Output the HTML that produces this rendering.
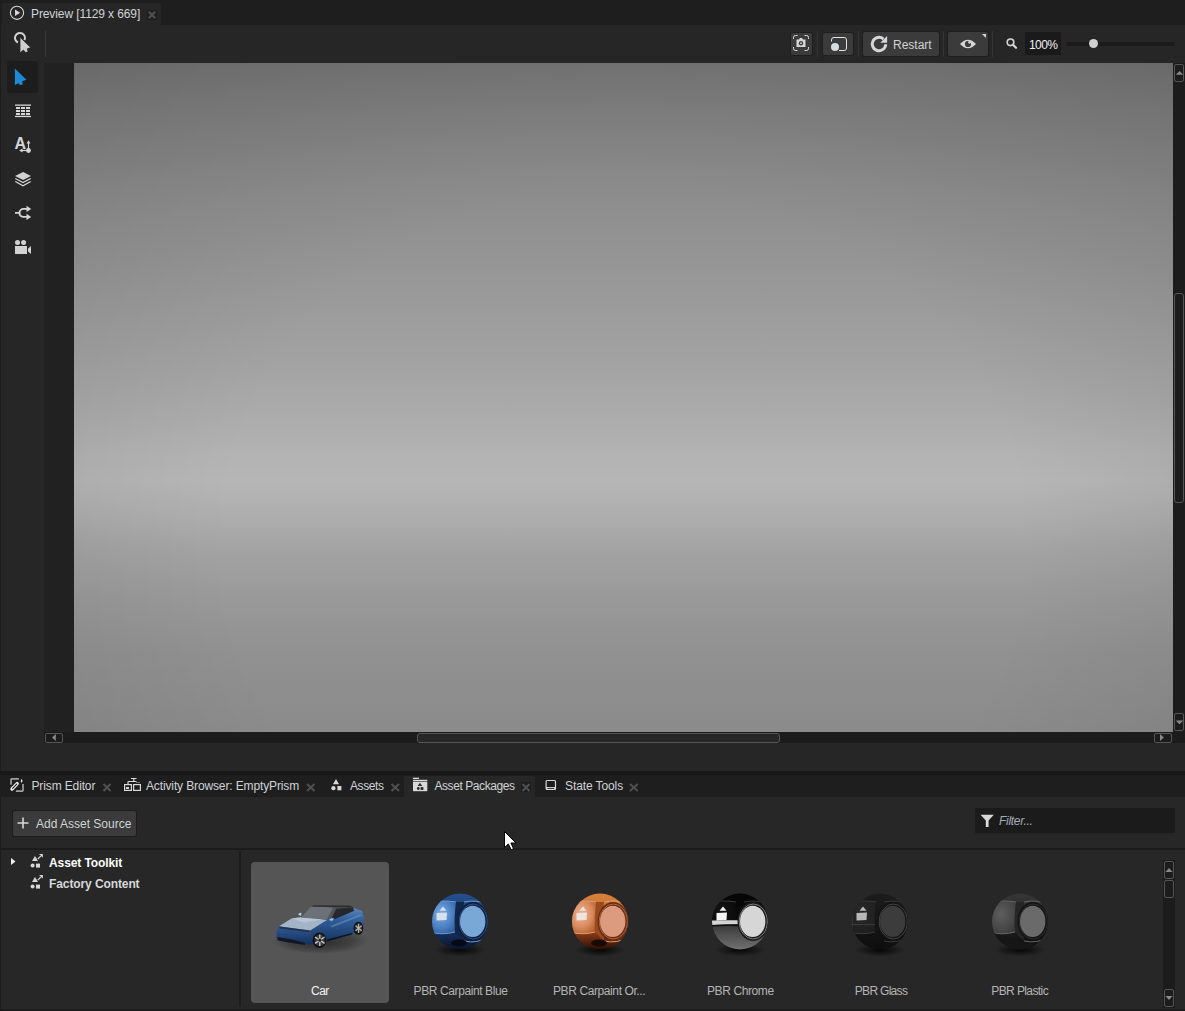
<!DOCTYPE html>
<html><head><meta charset="utf-8">
<style>
*{margin:0;padding:0;box-sizing:border-box}
html,body{width:1185px;height:1011px;overflow:hidden;background:#1c1c1c;font-family:"Liberation Sans",sans-serif;font-size:12px;color:#d4d4d4}
.a{position:absolute}
.t{position:absolute;white-space:nowrap;line-height:1}
svg{position:absolute;overflow:visible}
.btn{position:absolute;background:#3a3b3a;border-radius:2px;box-shadow:0 0 0 1px #1e1e1e}
.sep{position:absolute;width:1px;height:26px;top:31px;background:#353535}
.sb{position:absolute;border:1px solid #555;border-radius:3px}
.tab{color:#cfd3d6}
.lbl{color:#b4b4b4;letter-spacing:-0.4px}
</style></head><body>
<!-- ===== top tab strip ===== -->
<div class="a" style="left:0;top:0;width:1185px;height:25px;background:#1e1e1e"></div>
<div class="a" style="left:2px;top:3px;width:159px;height:22px;background:#262626;border-radius:2px 2px 0 0"></div>
<div class="t tab" style="left:31px;top:8px;letter-spacing:-0.1px">Preview [1129 x 669]</div>
<svg style="left:0;top:0" width="40" height="25"><circle cx="17" cy="12.8" r="6.6" fill="none" stroke="#d6d6d6" stroke-width="1.1"/><path d="M15 9.6 L20.2 12.8 L15 16 Z" fill="#d6d6d6"/></svg>
<div class="a" style="left:147px;top:10px;width:10px;height:10px;background:#1e1e1e"></div>
<svg style="left:147px;top:10px" width="10" height="10"><path d="M1.8 1.8 L8.2 8.2 M8.2 1.8 L1.8 8.2" stroke="#4e4e4e" stroke-width="2.3"/></svg>

<!-- ===== main preview panel ===== -->
<div class="a" style="left:1px;top:25px;width:1184px;height:746px;background:#262626"></div>
<div class="a" style="left:45px;top:31px;width:1px;height:26px;background:#3a3a3a"></div>
<!-- pointer icon -->
<svg style="left:0;top:25px" width="44" height="38"><path d="M17.9 17.5 A5 5 0 1 1 24.5 15.1" fill="none" stroke="#d2d2d2" stroke-width="2"/><path d="M20 12.2 L30.8 22.6 L27.3 23.8 L28.2 26.7 L25.5 27.6 L23.4 25 L20 28 Z" fill="#cfcfcf" stroke="#262626" stroke-width="0.8"/></svg>
<!-- left tools -->
<div class="a" style="left:7px;top:61px;width:31px;height:32px;background:#1d1d1d;border-radius:3px"></div>
<svg style="left:0;top:60px" width="44" height="200">
<path d="M14.9 8.6 L26.5 19.7 L22.1 21.2 L22.9 24.5 L20 25 L18.5 23.3 L14.9 25 Z" fill="#1f8ad4"/>
<rect x="15" y="44.5" width="16" height="1.3" fill="#d6d6d6"/><rect x="15" y="55.8" width="16" height="1.3" fill="#d6d6d6"/>
<g fill="#d6d6d6"><rect x="16" y="47" width="4" height="2"/><rect x="21" y="47" width="4" height="2"/><rect x="26" y="47" width="4" height="2"/>
<rect x="16" y="50" width="4" height="2"/><rect x="21" y="50" width="4" height="2"/><rect x="26" y="50" width="4" height="2"/>
<rect x="16" y="53" width="4" height="2"/><rect x="21" y="53" width="4" height="2"/><rect x="26" y="53" width="4" height="2"/></g>
</svg>
<svg style="left:0;top:130px" width="44" height="140">
<text x="14.6" y="19" font-family="Liberation Sans" font-weight="bold" font-size="16" fill="#d6d6d6">A</text>
<path d="M28.5 20.5 V12" stroke="#d6d6d6" stroke-width="1.2"/><path d="M26.5 13.5 L28.5 10.3 L30.5 13.5 Z" fill="#d6d6d6"/>
<path d="M28.5 20.5 H21" stroke="#d6d6d6" stroke-width="1.2"/><path d="M22.5 18.5 L19.2 20.5 L22.5 22.5 Z" fill="#d6d6d6"/>
<circle cx="28.5" cy="20.5" r="2.4" fill="#d6d6d6"/>
<path d="M15 45.9 L23.1 41.9 L31 45.9 L23.1 50 Z" fill="#d2d2d2"/>
<path d="M15.3 48.5 L23 52.5 L30.7 48.5 M15.3 51.5 L23 55.7 L30.7 51.5" fill="none" stroke="#d6d6d6" stroke-width="1.3"/>
<path d="M15 82.9 H20 M29 78.9 H23.5 A4 4 0 0 0 23.5 86.9 H29" fill="none" stroke="#d6d6d6" stroke-width="1.9"/>
<path d="M26.5 75.8 L31.2 78.9 L26.5 82 Z M26.5 83.8 L31.2 86.9 L26.5 90 Z" fill="#d6d6d6"/>
<circle cx="17.5" cy="112.4" r="2.5" fill="#d2d2d2"/><circle cx="23.6" cy="112.4" r="2.5" fill="#d2d2d2"/>
<rect x="15" y="116" width="12" height="8" fill="#d2d2d2"/><path d="M28 118.8 L31 116 V124 L28 121.4 Z" fill="#d2d2d2"/>
</svg>
<!-- right toolbar -->
<div class="btn" style="left:791px;top:33px;width:21px;height:22px"></div>
<div class="sep" style="left:817px"></div>
<div class="btn" style="left:823px;top:33px;width:30px;height:22px"></div>
<div class="sep" style="left:858px"></div>
<div class="btn" style="left:863px;top:32px;width:76px;height:24px"></div>
<div class="sep" style="left:943px"></div>
<div class="btn" style="left:948px;top:32px;width:40px;height:24px"></div>
<div class="sep" style="left:992px"></div>
<svg style="left:780px;top:25px" width="405" height="38">
<path d="M13.5 14 V12.5 A2 2 0 0 1 15.5 10.5 H17.5 M24.5 10.5 H26.5 A2 2 0 0 1 28.5 12.5 V14 M28.5 22 V23.5 A2 2 0 0 1 26.5 25.5 H24.5 M17.5 25.5 H15.5 A2 2 0 0 1 13.5 23.5 V22" fill="none" stroke="#dadada" stroke-width="1"/>
<path d="M16.5 14.5 H19 L20 13 H22 L23 14.5 H25.5 V22 H16.5 Z" fill="#d6d6d6"/><circle cx="21" cy="18.2" r="2.2" fill="#3a3b3a"/><circle cx="21" cy="18.2" r="0.9" fill="#d6d6d6"/>
<path d="M51.5 16.5 V15 A2.5 2.5 0 0 1 54 12.5 H64 A2.5 2.5 0 0 1 66.5 15 V23 A2.5 2.5 0 0 1 64 25.5 H59" fill="none" stroke="#e0e3e8" stroke-width="1"/>
<circle cx="55" cy="22.1" r="4" fill="#d8dce3"/>
<path d="M103.48 14.02 A6.7 6.7 0 1 0 105.7 19.23" fill="none" stroke="#d6d6d6" stroke-width="3"/>
<path d="M100.3 17.8 L107.1 11 L107.1 17.8 Z" fill="#d6d6d6"/>
<path d="M180 19 Q188 10.5 196 19 Q188 27.5 180 19 Z" fill="#d6d6d6"/><circle cx="188" cy="19" r="3.1" fill="#3a3b3a"/><circle cx="189.6" cy="17.3" r="1.4" fill="#d6d6d6"/>
<path d="M202 9 H206 V13 Z" fill="#d6d6d6"/>
<circle cx="230.5" cy="17.3" r="3.3" fill="none" stroke="#d6d6d6" stroke-width="1.6"/><path d="M233 19.8 L236 22.8" stroke="#d6d6d6" stroke-width="2.3" stroke-linecap="round"/>
</svg>
<div class="t tab" style="left:893px;top:38.7px">Restart</div>
<div class="a" style="left:1025px;top:32px;width:36px;height:23px;background:#1a1a1a"></div>
<div class="t" style="left:1029px;top:38.8px;color:#f0f0f0;letter-spacing:-0.6px">100%</div>
<div class="a" style="left:1066px;top:42px;width:109px;height:4px;background:#1a1b1a;border-radius:2px"></div>
<div class="a" style="left:1088.8px;top:39.4px;width:9px;height:9px;background:#d0d0d0;border-radius:50%"></div>

<!-- gutter -->
<div class="a" style="left:44px;top:63px;width:30px;height:669px;background:#212121"></div>
<!-- preview -->
<div class="a" id="pv" style="left:74px;top:63px;width:1099px;height:669px;background:radial-gradient(ellipse 72% 105% at 50% 72%,rgba(0,0,0,0) 50%,rgba(0,0,0,0.11) 100%),linear-gradient(#757575 0%,#808080 8%,#8d8d8d 20%,#989898 33%,#a3a3a3 45%,#adadad 54%,#b3b3b3 58.5%,#b6b6b6 62.5%,#aeaeae 67.5%,#a3a3a3 73%,#999999 80%,#919191 88%,#8b8b8b 100%)"></div>
<!-- v scrollbar -->
<div class="a" style="left:1173px;top:63px;width:12px;height:669px;background:#1b1c1b"></div>
<div class="sb" style="left:1174px;top:64px;width:10px;height:18px;border-radius:2px"></div>
<svg style="left:1173px;top:63px" width="12" height="669"><path d="M2.8 11.8 L6.5 8 L10.2 11.8 Z" fill="#8a8a8a"/><path d="M2.8 657.5 L6.5 661.2 L10.2 657.5 Z" fill="#8a8a8a"/></svg>
<div class="sb" style="left:1174px;top:293px;width:10px;height:210px"></div>
<div class="sb" style="left:1174px;top:713px;width:10px;height:18px;border-radius:2px"></div>
<!-- h scrollbar -->
<div class="a" style="left:44px;top:732px;width:1129px;height:11px;background:#1b1c1b"></div>
<div class="a" style="left:1173px;top:732px;width:12px;height:11px;background:#1b1c1b"></div>
<div class="sb" style="left:45px;top:733px;width:18px;height:10px;border-radius:2px"></div>
<div class="sb" style="left:417px;top:733px;width:363px;height:10px;background:#272727"></div>
<div class="sb" style="left:1154px;top:733px;width:18px;height:10px;border-radius:2px"></div>
<svg style="left:44px;top:732px" width="1141" height="11"><path d="M11.8 2 L8 5.5 L11.8 9 Z" fill="#8a8a8a"/><path d="M1116 2 L1119.8 5.5 L1116 9 Z" fill="#8a8a8a"/></svg>

<!-- ===== bottom tabs ===== -->
<div class="a" style="left:0;top:771px;width:1185px;height:4px;background:#181818"></div>
<div class="a" style="left:0;top:775px;width:1185px;height:22px;background:#1e1e1e"></div>
<div class="a" style="left:404px;top:775.5px;width:131px;height:22px;background:#272727;border-radius:2px 2px 0 0"></div>

<!-- ===== bottom panel ===== -->
<div class="a" style="left:1px;top:797px;width:1184px;height:212px;background:#272727"></div>
<div class="a" style="left:1px;top:848px;width:1184px;height:2px;background:#1c1c1c"></div>
<div class="a" style="left:239px;top:851px;width:2px;height:156px;background:#1c1c1c"></div>

<!-- tab icons & labels -->
<svg style="left:0;top:775px" width="700" height="22">
<g fill="none" stroke="#a0a0a0" stroke-width="1.7">
<path d="M11 9.7 V4.6 Q11 3.9 11.7 3.9 H18.9"/><path d="M23 8.9 V15.3 Q23 16.1 22.2 16.1 H15.9"/>
</g>
<ellipse cx="21.6" cy="5.9" rx="0.8" ry="1.6" fill="#eee"/>
<path d="M12 14 L17.2 8.6" stroke="#f0f0f0" stroke-width="3.4" stroke-linecap="round"/>
<path d="M12.6 13.4 L16.7 9.1" stroke="#1e1e1e" stroke-width="1.1" stroke-linecap="round"/>
<path d="M103.5 9 L110.5 16 M110.5 9 L103.5 16" stroke="#505050" stroke-width="2"/>
<g fill="none" stroke="#d8d8d8" stroke-width="1.2">
<path d="M131 3.5 H136.5 M133.8 3.5 V6.5 M128 6.5 H136.5 M128 6.5 V9.5"/>
<rect x="124.6" y="9.6" width="6.8" height="5.8"/><rect x="133.6" y="9.6" width="6.8" height="5.8"/>
</g>
<rect x="126" y="12" width="3" height="2" fill="#d8d8d8"/>
<circle cx="137" cy="7.5" r="0.6" fill="#d8d8d8"/><circle cx="139" cy="7.5" r="0.6" fill="#d8d8d8"/>
<path d="M307 9 L314.5 16 M314.5 9 L307 16" stroke="#505050" stroke-width="2"/>
<g fill="#d8d8d8"><path d="M336 4 L339 9.3 L333 9.3 Z"/><circle cx="333.4" cy="13.2" r="2.1"/><rect x="337.4" y="11" width="4" height="4.3"/></g>
<path d="M391.5 9 L399 16 M399 9 L391.5 16" stroke="#505050" stroke-width="2"/>
<g fill="#d8d8d8"><rect x="413" y="2.7" width="6" height="1.3"/><rect x="413" y="4.8" width="14.3" height="1.2"/><rect x="413" y="6.6" width="14.3" height="9.6"/></g>
<g fill="#272727"><path d="M420 7.8 L422.3 11 L417.7 11 Z"/><circle cx="418.3" cy="13.5" r="1.4"/><rect x="420.6" y="12.1" width="2.8" height="2.8"/></g>
<rect x="521" y="7" width="10" height="9.6" fill="#1d1d1d"/>
<path d="M522.5 9 L529.5 16 M529.5 9 L522.5 16" stroke="#505050" stroke-width="2"/>
<g fill="none" stroke="#d8d8d8" stroke-width="1.2"><rect x="546.1" y="5.5" width="9.4" height="8.8" rx="1"/></g>
<rect x="546" y="12" width="9.6" height="2.8" fill="#d8d8d8"/><rect x="547.5" y="12.9" width="6.6" height="0.9" fill="#1e1e1e"/>
<path d="M630 9 L637.8 16 M637.8 9 L630 16" stroke="#505050" stroke-width="2"/>
</svg>
<div class="t tab" style="left:31.5px;top:779.6px;letter-spacing:-0.13px">Prism Editor</div>
<div class="t tab" style="left:146px;top:779.6px;letter-spacing:-0.13px">Activity Browser: EmptyPrism</div>
<div class="t tab" style="left:350px;top:780.1px;letter-spacing:-0.4px">Assets</div>
<div class="t tab" style="left:434.4px;top:780.1px;letter-spacing:-0.42px">Asset Packages</div>
<div class="t tab" style="left:565px;top:779.6px;letter-spacing:-0.1px">State Tools</div>

<!-- add asset source -->
<div class="btn" style="left:13px;top:811px;width:123px;height:25px;background:#3a3b3a"></div>
<svg style="left:0;top:800px" width="200" height="48"><path d="M23 17.5 V28.5 M17.5 23 H28.5" stroke="#d8d8d8" stroke-width="1.6"/></svg>
<div class="t tab" style="left:36px;top:817.6px">Add Asset Source</div>
<!-- filter -->
<div class="a" style="left:975px;top:808px;width:200px;height:25px;background:#1a1b1a"></div>
<svg style="left:975px;top:808px" width="200" height="25"><path d="M5.6 6.8 H18.8 L13.6 12.6 V19 H10.8 V12.6 Z" fill="#d8d8d8"/></svg>
<div class="t" style="left:999px;top:815px;font-style:italic;color:#a6adb5;letter-spacing:-0.3px">Filter...</div>

<!-- tree -->
<svg style="left:0;top:850px" width="240" height="60">
<path d="M11 8 L15.5 11.5 L11 15 Z" fill="#eeeeee"/>
<g fill="#d8d8d8">
<path d="M35 6 L38 11 L32 11 Z"/><circle cx="32.6" cy="15.6" r="2"/><rect x="36" y="13.6" width="4" height="4"/>
<path d="M37.8 9 L42 4.8 M39.5 4.5 H42.3 V7.3" stroke="#d8d8d8" stroke-width="1.1" fill="none"/>
<path d="M35 27 L38 32 L32 32 Z"/><circle cx="32.6" cy="36.6" r="2"/><rect x="36" y="34.6" width="4" height="4"/>
<path d="M37.8 30 L42 25.8 M39.5 25.5 H42.3 V28.3" stroke="#d8d8d8" stroke-width="1.1" fill="none"/>
</g>
</svg>
<div class="t" style="left:49px;top:856.8px;font-weight:bold;color:#ffffff;letter-spacing:-0.1px">Asset Toolkit</div>
<div class="t" style="left:49px;top:878px;font-weight:bold;color:#d6d8da;letter-spacing:-0.1px">Factory Content</div>

<!-- grid scrollbar -->
<div class="a" style="left:1163px;top:860px;width:12px;height:148px;background:#1b1c1b"></div>
<div class="sb" style="left:1164px;top:861px;width:10px;height:18px;border-radius:2px"></div>
<div class="sb" style="left:1164px;top:880px;width:10px;height:18px;border-radius:2px"></div>
<div class="sb" style="left:1164px;top:988.5px;width:10px;height:18px;border-radius:2px"></div>
<svg style="left:1163px;top:860px" width="12" height="150"><path d="M2.5 12 L6 8.1 L9.5 12 Z" fill="#8a8a8a"/><path d="M2.5 136 L6 140 L9.5 136 Z" fill="#8a8a8a"/></svg>

<!-- car card -->
<div class="a" style="left:251px;top:862px;width:138px;height:141px;background:#555555;border-radius:4px"></div>
<div class="t" style="left:311px;top:985.2px;color:#f2f2f2;letter-spacing:-0.5px">Car</div>
<div class="t lbl" style="left:413.6px;top:984.6px">PBR Carpaint Blue</div>
<div class="t lbl" style="left:553px;top:984.6px">PBR Carpaint Or...</div>
<div class="t lbl" style="left:707px;top:984.6px">PBR Chrome</div>
<div class="t lbl" style="left:854.8px;top:984.6px;letter-spacing:-0.7px">PBR Glass</div>
<div class="t lbl" style="left:991.3px;top:984.6px;letter-spacing:-0.6px">PBR Plastic</div>

<!-- cursor -->
<svg style="left:504px;top:831px" width="14" height="20"><path d="M0.5 0.5 V16.6 L4.3 13 L7.2 18.7 L9.6 17.7 L6.9 12 H12 Z" fill="#ffffff" stroke="#000" stroke-width="1"/></svg>
<!--GRID-->
<!-- car -->
<svg style="left:270px;top:895px" width="100" height="62">
<defs>
<radialGradient id="carsh" cx="50%" cy="50%" r="50%"><stop offset="0" stop-color="#000" stop-opacity="0.5"/><stop offset="0.7" stop-color="#000" stop-opacity="0.22"/><stop offset="1" stop-color="#000" stop-opacity="0"/></radialGradient>
<linearGradient id="carside" x1="0" y1="0" x2="0" y2="1"><stop offset="0" stop-color="#5c86bc"/><stop offset="0.35" stop-color="#2e5c98"/><stop offset="1" stop-color="#163058"/></linearGradient>
<linearGradient id="carfront" x1="0" y1="0" x2="0" y2="1"><stop offset="0" stop-color="#2e5a96"/><stop offset="1" stop-color="#16305a"/></linearGradient>
</defs>
<ellipse cx="50" cy="46" rx="48" ry="13" fill="url(#carsh)"/>
<path d="M56 25 L84 13 L92 16 L94 22 L93 31 L86 38 L60 45.5 L46 49 L40 36 Z" fill="url(#carside)"/>
<path d="M6.5 36 L9 31.2 L40 35.4 L46 49 L34 49.5 L10 46 L6.5 43 Z" fill="url(#carfront)"/>
<path d="M9 31.2 L21.5 23.5 L33 22 L57 24.9 L40 35.4 Z" fill="#a4b4c8"/>
<path d="M21.5 23.5 L33 22 L52 24.5 L34 27.5 Z" fill="#c4d0de" opacity="0.6"/>
<path d="M31.2 22.8 L41 11.6 L63.3 12.3 L57 24.2 Z" fill="#6c7078"/>
<path d="M61.9 22.8 L66.1 13.7 L82.9 12.3 L84.2 15.8 L64.7 24.2 Z" fill="#25282e"/>
<path d="M41 11.6 L44 10.3 L80 10.6 L83 12.3 L63.3 12.3 Z" fill="#2e2e2e"/>
<path d="M7.5 42 L22 44.5 L35 48 L35 50 L20 47.8 L7.5 45.3 Z" fill="#121824"/>
<path d="M9 31.5 L40 35.6 L39 37.2 L9.5 33.5 Z" fill="#223450"/>
<path d="M57 44.6 L82 38 L82 39.6 L57.5 46.2 Z" fill="#0e1420"/>
<path d="M60 31 L90 19.5 L92 20.5 L62 32.5 Z" fill="#8aa6c8" opacity="0.4"/>
<ellipse cx="49.5" cy="45.2" rx="6.8" ry="7.8" fill="#111"/>
<ellipse cx="49.8" cy="45.2" rx="5" ry="6" fill="#3a3a3a"/>
<path d="M49.8 39.5 V51 M45 42 L54.6 48.4 M45 48.4 L54.6 42" stroke="#c8c8c8" stroke-width="1.3"/>
<ellipse cx="49.8" cy="45.2" rx="1.5" ry="1.8" fill="#222"/>
<ellipse cx="88.4" cy="33.3" rx="4.8" ry="6.5" fill="#111"/>
<ellipse cx="88.6" cy="33.3" rx="3.4" ry="4.8" fill="#3a3a3a"/>
<path d="M88.6 28.8 V37.8 M85.5 30.8 L91.7 35.8 M85.5 35.8 L91.7 30.8" stroke="#b8b8b8" stroke-width="1.1"/>
<path d="M28 19.5 Q29.5 17 31.5 18 L31 21 Z" fill="#a8c8e8"/>
<path d="M59 25 Q61 22.5 64 23.5 L62 26 Z" fill="#a8c0dc"/>
</svg>
<svg style="left:415px;top:880px" width="90" height="90">
<defs>
<linearGradient id="vb" x1="0" y1="0" x2="0" y2="1"><stop offset="0" stop-color="#24508c"/><stop offset="0.45" stop-color="#1b3c72"/><stop offset="0.8" stop-color="#12284e"/><stop offset="1" stop-color="#0a1428"/></linearGradient>
<radialGradient id="lb" cx="0.45" cy="0.4" r="0.75"><stop offset="0" stop-color="#7cb0e4"/><stop offset="0.6" stop-color="#4a7cc0"/><stop offset="1" stop-color="#2a5494"/></radialGradient>
<radialGradient id="sb" cx="50%" cy="50%" r="50%"><stop offset="0" stop-color="#000" stop-opacity="0.85"/><stop offset="1" stop-color="#000" stop-opacity="0"/></radialGradient>
<clipPath id="cb"><circle cx="45" cy="41.5" r="28"/></clipPath>
</defs>
<ellipse cx="45" cy="70" rx="26" ry="6.5" fill="url(#sb)"/>
<circle cx="45" cy="41.5" r="28" fill="url(#vb)"/>
<g clip-path="url(#cb)">
<path d="M14 23 Q26 19.5 41 22 Q39 37 40 52 Q27 55.5 14 52 Z" fill="url(#lb)"/>
<path d="M14 23 Q26 19.5 41 22 M40 52 Q27 55.5 14 52" fill="none" stroke="#6a9ad0" stroke-width="1"/>
<path d="M49 22 Q62 19 74 25 M49 61 Q62 64 74 57" fill="none" stroke="#6a9ad0" stroke-width="1"/>
<path d="M41 22 Q39 37 40 52 L49 61 Q47 40 49 22 Z" fill="#12264a"/><ellipse cx="44" cy="63" rx="8" ry="3.5" fill="#060a14"/>
<ellipse cx="58" cy="41.5" rx="15.5" ry="19.5" fill="#0e1e3c"/>
<ellipse cx="58.3" cy="41.5" rx="14" ry="17.5" fill="none" stroke="#3a68a8" stroke-width="0.7"/>
</g>
<ellipse cx="57.7" cy="41.4" rx="12.7" ry="15.6" fill="#7aa8d6"/>
<path d="M21.5 33 L32 32.5 L31.5 40 L21.5 40.5 Z M24.5 30.8 L28 26.5 L31.5 30.8 Z" fill="#d8e0ea"/>
</svg>
<svg style="left:555px;top:880px" width="90" height="90">
<defs>
<linearGradient id="vo" x1="0" y1="0" x2="0" y2="1"><stop offset="0" stop-color="#d8823c"/><stop offset="0.4" stop-color="#c46c30"/><stop offset="0.7" stop-color="#8a3a18"/><stop offset="1" stop-color="#2a1006"/></linearGradient>
<radialGradient id="lo" cx="0.45" cy="0.4" r="0.75"><stop offset="0" stop-color="#ecb498"/><stop offset="0.55" stop-color="#d88a5c"/><stop offset="1" stop-color="#a85426"/></radialGradient>
<radialGradient id="so" cx="50%" cy="50%" r="50%"><stop offset="0" stop-color="#000" stop-opacity="0.85"/><stop offset="1" stop-color="#000" stop-opacity="0"/></radialGradient>
<clipPath id="co"><circle cx="45" cy="41.5" r="28"/></clipPath>
</defs>
<ellipse cx="45" cy="70" rx="26" ry="6.5" fill="url(#so)"/>
<circle cx="45" cy="41.5" r="28" fill="url(#vo)"/>
<g clip-path="url(#co)">
<path d="M14 23 Q26 19.5 41 22 Q39 37 40 52 Q27 55.5 14 52 Z" fill="url(#lo)"/>
<path d="M14 23 Q26 19.5 41 22 M40 52 Q27 55.5 14 52" fill="none" stroke="#e09a70" stroke-width="1"/>
<path d="M49 22 Q62 19 74 25 M49 61 Q62 64 74 57" fill="none" stroke="#e09a70" stroke-width="1"/>
<path d="M41 22 Q39 37 40 52 L49 61 Q47 40 49 22 Z" fill="#9a4a1e"/><ellipse cx="44" cy="63" rx="8" ry="3.5" fill="#1a0a04"/>
<ellipse cx="58" cy="41.5" rx="15.5" ry="19.5" fill="#6a2c10"/>
<ellipse cx="58.3" cy="41.5" rx="14" ry="17.5" fill="none" stroke="#c88050" stroke-width="0.7"/>
</g>
<ellipse cx="57.7" cy="41.4" rx="12.7" ry="15.6" fill="#dc9a7e"/>
<path d="M21.5 33 L32 32.5 L31.5 40 L21.5 40.5 Z M24.5 30.8 L28 26.5 L31.5 30.8 Z" fill="#f0e2de"/>
</svg>
<svg style="left:695px;top:880px" width="90" height="90">
<defs>
<linearGradient id="vc" x1="0" y1="0" x2="0" y2="1"><stop offset="0" stop-color="#050505"/><stop offset="0.5" stop-color="#0c0c0c"/><stop offset="1" stop-color="#0c0c0c"/></linearGradient>
<radialGradient id="lc" cx="0.45" cy="0.4" r="0.75"><stop offset="0" stop-color="#151515"/><stop offset="1" stop-color="#080808"/></radialGradient>
<radialGradient id="sc" cx="50%" cy="50%" r="50%"><stop offset="0" stop-color="#000" stop-opacity="0.85"/><stop offset="1" stop-color="#000" stop-opacity="0"/></radialGradient>
<clipPath id="cc"><circle cx="45" cy="41.5" r="28"/></clipPath>
</defs>
<ellipse cx="45" cy="70" rx="26" ry="6.5" fill="url(#sc)"/>
<circle cx="45" cy="41.5" r="28" fill="url(#vc)"/>
<g clip-path="url(#cc)">
<path d="M14 23 Q26 19.5 41 22 Q39 37 40 52 Q27 55.5 14 52 Z" fill="url(#lc)"/>
<path d="M14 23 Q26 19.5 41 22 M40 52 Q27 55.5 14 52" fill="none" stroke="#3a3a3a" stroke-width="1"/>
<path d="M49 22 Q62 19 74 25 M49 61 Q62 64 74 57" fill="none" stroke="#3a3a3a" stroke-width="1"/>
<defs><linearGradient id="chl" x1="0" y1="0" x2="0" y2="1"><stop offset="0" stop-color="#3a3a3a"/><stop offset="1" stop-color="#8a8a8a"/></linearGradient></defs><path d="M10 46.5 Q30 45.5 80 46 L80 80 L10 80 Z" fill="url(#chl)"/><path d="M14 40.5 Q28 40 46 40.3 L46 44.3 Q28 44.5 14 45 Z" fill="#d4d4d4"/><path d="M14 45 Q28 44.5 46 44.3 L46 46.3 Q28 45.6 14 46.8 Z" fill="#111"/>
<ellipse cx="58" cy="41.5" rx="15.5" ry="19.5" fill="#1a1a1a"/>
<ellipse cx="58.3" cy="41.5" rx="14" ry="17.5" fill="none" stroke="#aaaaaa" stroke-width="0.7"/>
</g>
<ellipse cx="57.7" cy="41.4" rx="12.7" ry="15.6" fill="#d6d6d6"/>
<path d="M21.5 33 L32 32.5 L31.5 40 L21.5 40.5 Z M24.5 30.8 L28 26.5 L31.5 30.8 Z" fill="#f6f6f6"/>
</svg>
<svg style="left:835px;top:880px" width="90" height="90">
<defs>
<linearGradient id="vg" x1="0" y1="0" x2="0" y2="1"><stop offset="0" stop-color="#1c1c1c"/><stop offset="0.5" stop-color="#161616"/><stop offset="1" stop-color="#0e0e0e"/></linearGradient>
<radialGradient id="lg" cx="0.45" cy="0.4" r="0.75"><stop offset="0" stop-color="#2a2a2a"/><stop offset="1" stop-color="#1c1c1c"/></radialGradient>
<radialGradient id="sg" cx="50%" cy="50%" r="50%"><stop offset="0" stop-color="#000" stop-opacity="0.85"/><stop offset="1" stop-color="#000" stop-opacity="0"/></radialGradient>
<clipPath id="cg"><circle cx="45" cy="41.5" r="28"/></clipPath>
</defs>
<ellipse cx="45" cy="70" rx="26" ry="6.5" fill="url(#sg)"/>
<circle cx="45" cy="41.5" r="28" fill="url(#vg)"/>
<g clip-path="url(#cg)">
<path d="M14 23 Q26 19.5 41 22 Q39 37 40 52 Q27 55.5 14 52 Z" fill="url(#lg)"/>
<path d="M14 23 Q26 19.5 41 22 M40 52 Q27 55.5 14 52" fill="none" stroke="#3a3a3a" stroke-width="1"/>
<path d="M49 22 Q62 19 74 25 M49 61 Q62 64 74 57" fill="none" stroke="#3a3a3a" stroke-width="1"/>
<path d="M14 44.5 H40" stroke="#3a3a3a" stroke-width="1"/><path d="M17.5 30 Q16 41.5 17.5 53" fill="none" stroke="#5a5a5a" stroke-width="1.2"/>
<ellipse cx="58" cy="41.5" rx="15.5" ry="19.5" fill="#141414"/>
<ellipse cx="58.3" cy="41.5" rx="14" ry="17.5" fill="none" stroke="#5a5a5a" stroke-width="0.7"/>
</g>
<ellipse cx="57.7" cy="41.4" rx="12.7" ry="15.6" fill="#3c3c3c"/>
<path d="M21.5 33 L32 32.5 L31.5 40 L21.5 40.5 Z M24.5 30.8 L28 26.5 L31.5 30.8 Z" fill="#b8b8b8"/>
</svg>
<svg style="left:975px;top:880px" width="90" height="90">
<defs>
<linearGradient id="vp" x1="0" y1="0" x2="0" y2="1"><stop offset="0" stop-color="#363636"/><stop offset="0.5" stop-color="#262626"/><stop offset="1" stop-color="#0c0c0c"/></linearGradient>
<radialGradient id="lp" cx="0.45" cy="0.4" r="0.75"><stop offset="0" stop-color="#5e5e5e"/><stop offset="0.6" stop-color="#484848"/><stop offset="1" stop-color="#383838"/></radialGradient>
<radialGradient id="sp" cx="50%" cy="50%" r="50%"><stop offset="0" stop-color="#000" stop-opacity="0.85"/><stop offset="1" stop-color="#000" stop-opacity="0"/></radialGradient>
<clipPath id="cp"><circle cx="45" cy="41.5" r="28"/></clipPath>
</defs>
<ellipse cx="45" cy="70" rx="26" ry="6.5" fill="url(#sp)"/>
<circle cx="45" cy="41.5" r="28" fill="url(#vp)"/>
<g clip-path="url(#cp)">
<path d="M14 23 Q26 19.5 41 22 Q39 37 40 52 Q27 55.5 14 52 Z" fill="url(#lp)"/>
<path d="M14 23 Q26 19.5 41 22 M40 52 Q27 55.5 14 52" fill="none" stroke="#666" stroke-width="1"/>
<path d="M49 22 Q62 19 74 25 M49 61 Q62 64 74 57" fill="none" stroke="#666" stroke-width="1"/>
<path d="M41 22 Q39 37 40 52 L49 61 Q47 40 49 22 Z" fill="#262626"/><path d="M14 52 Q30 56 50 62 L80 70 L10 75 Z" fill="#161616"/>
<ellipse cx="58" cy="41.5" rx="15.5" ry="19.5" fill="#131313"/>
<ellipse cx="58.3" cy="41.5" rx="14" ry="17.5" fill="none" stroke="#383838" stroke-width="0.7"/>
</g>
<ellipse cx="57.7" cy="41.4" rx="12.7" ry="15.6" fill="#6a6a6a"/>

</svg>
<!--/GRID-->
</body></html>
